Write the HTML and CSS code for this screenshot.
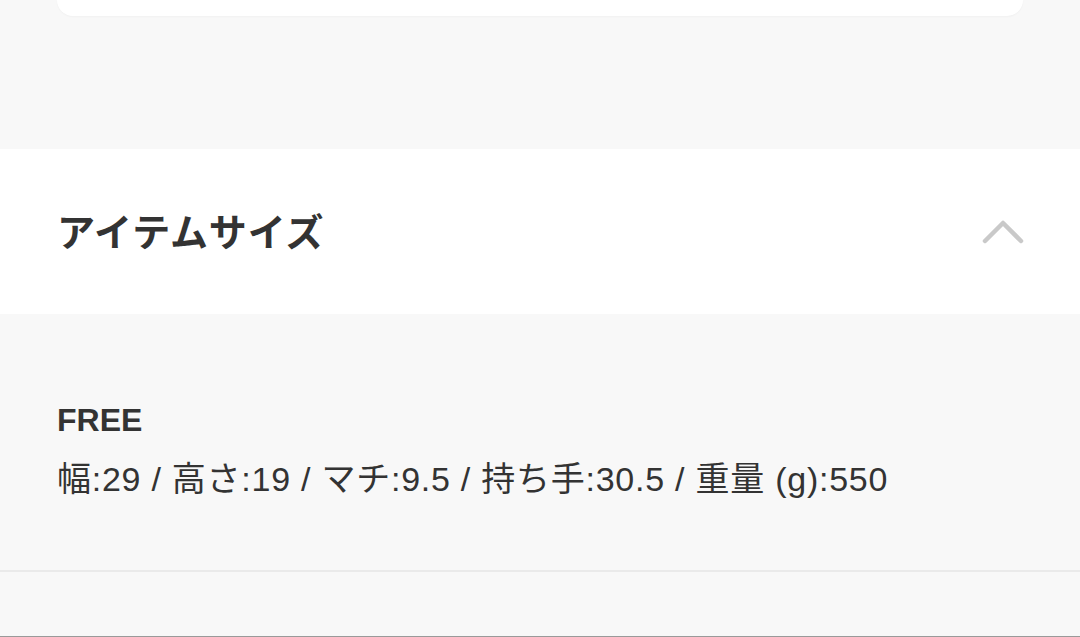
FILE: index.html
```html
<!DOCTYPE html>
<html lang="ja">
<head>
<meta charset="utf-8">
<title>アイテムサイズ</title>
<link rel="stylesheet" href="styles.css">
</head>
<body>

<div class="page">
  <div class="top-area">
    <div class="card"></div>
  </div>

  <section class="accordion">
    <div class="accordion-head">
      <h2 class="accordion-title">アイテムサイズ</h2>
      <svg class="chevron" width="42" height="26" viewBox="0 0 42 26">
        <path d="M3 22 L21 4 L39 22" fill="none" stroke="#c9c9c9" stroke-width="4.5" stroke-linecap="round" stroke-linejoin="round"/>
      </svg>
    </div>
    <div class="accordion-body">
      <p class="size-name">FREE</p>
      <p class="size-detail">幅:29 / 高さ:19 / マチ:9.5 / 持ち手:30.5 / 重量 (g):550</p>
    </div>
  </section>

  <div class="bottom-area"></div>
</div>

</body>
</html>
```

FILE: styles.css
```css
html, body {
    margin: 0;
    padding: 0;
}

body {
    font-family: "Liberation Sans", "Noto Sans CJK JP", sans-serif;
    background-color: #f8f8f8;
    color: #333;
}

.page {
    width: 1080px;
    height: 637px;
    overflow: hidden;
    display: flex;
    flex-direction: column;
    border-bottom: 1px solid #9a9a9a;
    box-sizing: border-box;
}

.top-area {
    height: 149px;
    padding: 0 57px;
    box-sizing: border-box;
}

.card {
    height: 16px;
    background-color: #fff;
    border-radius: 0 0 18px 18px;
    box-shadow: 0 1px 2px rgba(0, 0, 0, 0.03);
}

.accordion-head {
    height: 165px;
    background-color: #fff;
    display: flex;
    align-items: center;
    justify-content: space-between;
    padding: 0 57px;
}

.accordion-title {
    margin: -4px 0 0;
    font-family: "Noto Sans CJK JP", sans-serif;
    font-size: 38px;
    font-weight: bold;
    letter-spacing: 0.9px;
    color: #333;
}

.chevron {
    margin-right: -1px;
}

.accordion-body {
    padding: 88px 57px 0;
    height: 258px;
    box-sizing: border-box;
    border-bottom: 2px solid #eaeaea;
}

.size-name {
    margin: 0;
    font-size: 32px;
    font-weight: bold;
    line-height: 36px;
}

.size-detail {
    margin: 21px 0 0;
    font-size: 34px;
    letter-spacing: 0.75px;
    line-height: 40px;
}

.bottom-area {
    flex: 1;
}
```
